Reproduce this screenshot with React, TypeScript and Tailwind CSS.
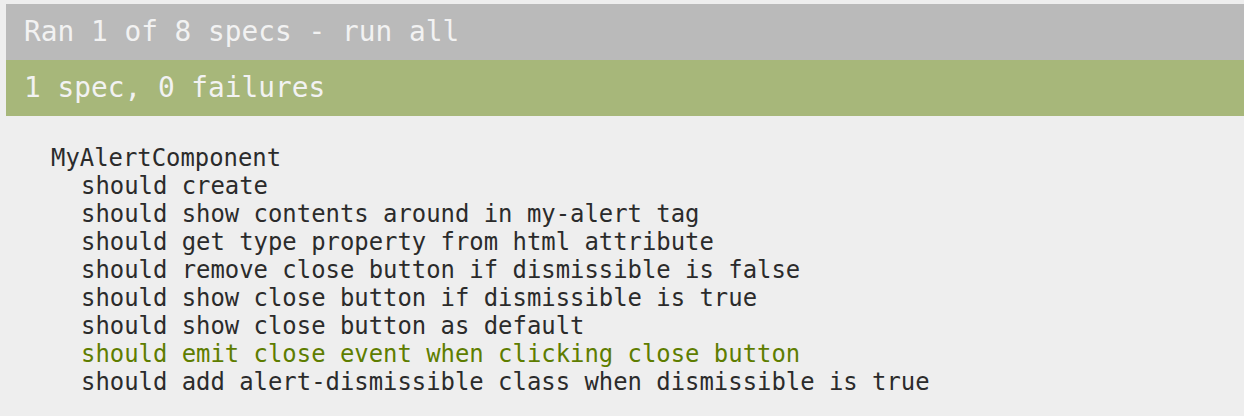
const SPECS = [
  { text: "should create" },
  { text: "should show contents around in my-alert tag" },
  { text: "should get type property from html attribute" },
  { text: "should remove close button if dismissible is false" },
  { text: "should show close button if dismissible is true" },
  { text: "should show close button as default" },
  { text: "should emit close event when clicking close button", passed: true },
  { text: "should add alert-dismissible class when dismissible is true" },
];

export default function App() {
  return (
    <div
      className="h-[416px] w-full overflow-hidden bg-[#eeeeee] pl-[6px] pt-[4px]"
      style={{ fontFamily: '"DejaVu Sans Mono", "Liberation Mono", monospace' }}
    >
      <div className="flex h-[56px] items-center bg-[#bababa] pl-[18px] text-[27.8px] text-[#f2f2f2]">
        Ran 1 of 8 specs - run all
      </div>
      <div className="flex h-[56px] items-center bg-[#a7b77a] pl-[18px] text-[27.8px] text-[#f2f2f2]">
        1 spec, 0 failures
      </div>
      <div className="pl-[45px] pt-[28px] text-[23.9px] leading-[28px] text-[#2b2b2b]">
        <div>MyAlertComponent</div>
        <div className="pl-[30px]">
          {SPECS.map((s) => (
            <div key={s.text} className={s.passed ? "text-[#5e7d00]" : ""}>
              {s.text}
            </div>
          ))}
        </div>
      </div>
    </div>
  );
}
